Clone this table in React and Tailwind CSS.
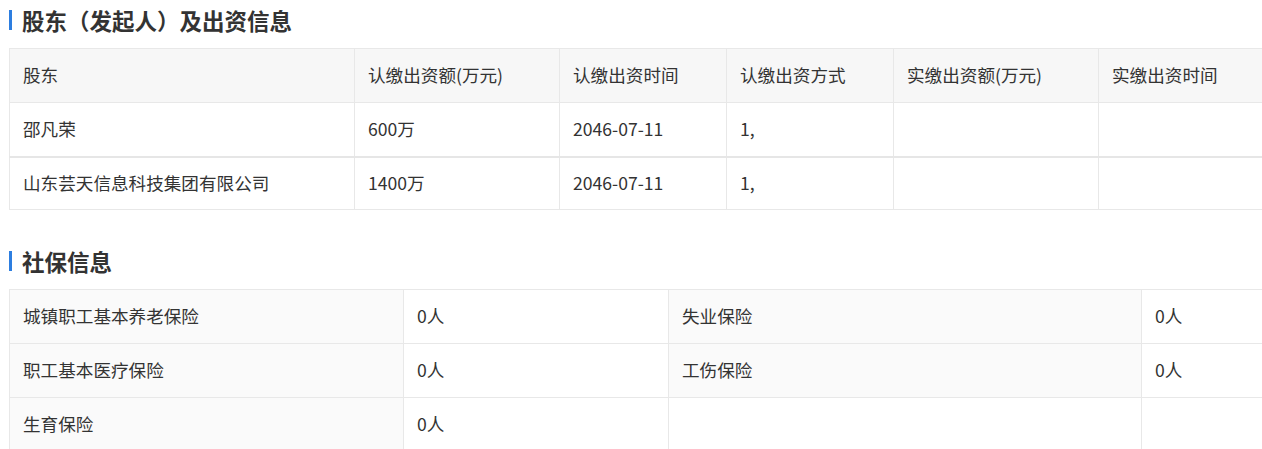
import React from "react";

const font = { fontFamily: '"Noto Sans CJK SC", "Microsoft YaHei", sans-serif' };

const shareholders = [
    { name: "邵凡荣", amount: "600万", date: "2046-07-11", way: "1,", paid: "", paidDate: "" },
    { name: "山东芸天信息科技集团有限公司", amount: "1400万", date: "2046-07-11", way: "1,", paid: "", paidDate: "" },
];

const insurance = [
    ["城镇职工基本养老保险", "0人", "失业保险", "0人"],
    ["职工基本医疗保险", "0人", "工伤保险", "0人"],
    ["生育保险", "0人", "", ""],
];

const SectionTitle = ({ children }) => (
    <div className="flex items-center h-[40px]">
        <span className="w-[3px] h-[20px] bg-[#2d7ee0] mr-[10px]"></span>
        <h2 className="text-[22.5px] font-bold text-[#333] leading-none">{children}</h2>
    </div>
);

const App = () => {
    const cell = "border border-[#e8e8e8] px-[13px] text-left font-normal align-middle";

    return (
        <div className="w-[1262px] h-[449px] overflow-hidden bg-white pl-[9px] text-[#333] text-[17.6px]" style={font}>
            <SectionTitle>股东（发起人）及出资信息</SectionTitle>
            <table className="mt-[8px] table-fixed border-collapse w-[1300px]">
                <colgroup>
                    <col className="w-[345px]" />
                    <col className="w-[205px]" />
                    <col className="w-[167px]" />
                    <col className="w-[167px]" />
                    <col className="w-[205px]" />
                    <col />
                </colgroup>
                <thead>
                    <tr className="bg-[#f7f7f7] h-[54px]">
                        <th className={cell}>股东</th>
                        <th className={cell}>认缴出资额(万元)</th>
                        <th className={cell}>认缴出资时间</th>
                        <th className={cell}>认缴出资方式</th>
                        <th className={cell}>实缴出资额(万元)</th>
                        <th className={cell}>实缴出资时间</th>
                    </tr>
                </thead>
                <tbody>
                    {shareholders.map((s, i) => (
                        <tr key={i} className={i === 0 ? "h-[54px] border-b-2 border-[#e6e6e6]" : "h-[53px]"}>
                            <td className={cell}>{s.name}</td>
                            <td className={cell}>{s.amount}</td>
                            <td className={cell}>{s.date}</td>
                            <td className={cell}>{s.way}</td>
                            <td className={cell}>{s.paid}</td>
                            <td className={cell}>{s.paidDate}</td>
                        </tr>
                    ))}
                </tbody>
            </table>

            <div className="mt-[31px]">
                <SectionTitle>社保信息</SectionTitle>
            </div>
            <table className="mt-[8px] table-fixed border-collapse w-[1300px]">
                <colgroup>
                    <col className="w-[394px]" />
                    <col className="w-[265px]" />
                    <col className="w-[473px]" />
                    <col />
                </colgroup>
                <tbody>
                    {insurance.map((row, i) => (
                        <tr key={i} className="h-[54px]">
                            <td className={`${cell} bg-[#fafafa]`}>{row[0]}</td>
                            <td className={cell}>{row[1]}</td>
                            <td className={`${cell} ${row[2] ? "bg-[#fafafa]" : ""}`}>{row[2]}</td>
                            <td className={cell}>{row[3]}</td>
                        </tr>
                    ))}
                </tbody>
            </table>
        </div>
    );
};

export default App;
